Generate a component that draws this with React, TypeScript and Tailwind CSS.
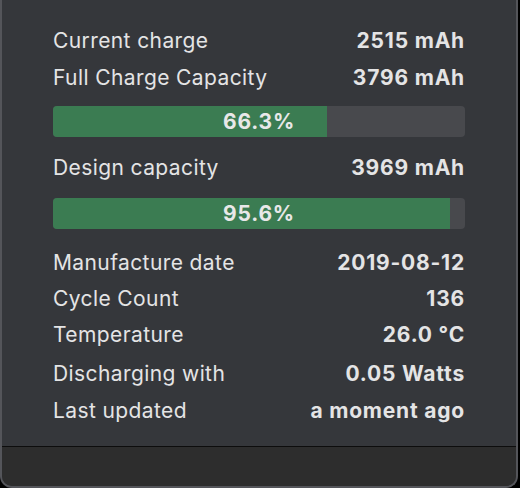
import React from "react";

function Row({ label, value, h, mt = "" }: { label: string; value: string; h: string; mt?: string }) {
  return (
    <div className={`flex items-center justify-between ${h} ${mt}`}>
      <span className="text-[21px] tracking-[0.4px] text-[#e4e4e5]">{label}</span>
      <span className="text-[21px] font-bold tracking-[0.8px] text-[#e4e4e5]">{value}</span>
    </div>
  );
}

function Bar({ pct, fill, mt }: { pct: string; fill: number; mt: string }) {
  return (
    <div className={`relative h-[31px] rounded-[4px] bg-[#48494d] overflow-hidden ${mt}`}>
      <div className="h-full bg-[#3b7c52]" style={{ width: `${fill}%` }} />
      <div className="absolute inset-0 flex items-center justify-center text-[21px] font-bold tracking-[0.8px] text-[#e8e8e8]">
        {pct}
      </div>
    </div>
  );
}

export default function App() {
  return (
    <div className="w-[520px] h-[488px] bg-black flex" style={{ fontFamily: "Inter, 'Noto Sans', sans-serif" }}>
      <div className="w-[518px] h-full flex flex-col rounded-b-[12px] overflow-hidden border-l-2 border-r-2 border-b-2 border-[#54555a] bg-[#35373b]">
        <div className="h-[446px] pl-[51px] pr-[51px] pt-[23px]">
          <Row label="Current charge" value="2515 mAh" h="h-[36px]" />
          <Row label="Full Charge Capacity" value="3796 mAh" h="h-[37px]" />
          <Bar pct="66.3%" fill={66.6} mt="mt-[10px]" />
          <Row label="Design capacity" value="3969 mAh" h="h-[36px]" mt="mt-[13px]" />
          <Bar pct="95.6%" fill={96.3} mt="mt-[12px]" />
          <Row label="Manufacture date" value="2019-08-12" h="h-[36px]" mt="mt-[16px]" />
          <Row label="Cycle Count" value="136" h="h-[35px]" />
          <Row label="Temperature" value="26.0 °C" h="h-[38px]" />
          <Row label="Discharging with" value="0.05 Watts" h="h-[40px]" />
          <Row label="Last updated" value="a moment ago" h="h-[34px]" />
        </div>
        <div className="h-px bg-[#0d0d0d]" />
        <div className="flex-1 bg-[#2d2d2d]" />
      </div>
    </div>
  );
}
